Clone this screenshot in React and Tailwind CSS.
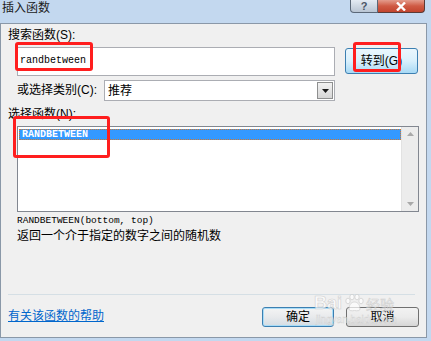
import React from "react";

const cjk = { fontFamily: '"Liberation Sans", "Noto Sans CJK SC", sans-serif' };
const mono = { fontFamily: '"Liberation Mono", "Noto Sans CJK SC", monospace' };
const faint = { WebkitTextStroke: "0.6px #c4c4c4" };

function RedBox({ className }) {
    return <div className={"absolute border-[3px] border-[#ff1e1e] rounded-[3px] pointer-events-none " + className} />;
}

export default function App() {
    return (
        <div className="relative w-[431px] h-[341px] overflow-hidden bg-[#c3d8ef] text-black" style={cjk}>
            {/* title bar */}
            <div className="flex h-[23px] items-start">
                <div className="pl-[2px] pt-[1px] text-[12px] leading-[14px] text-[#1b1b1b]">插入函数</div>
                <div className="ml-auto mr-[6px] flex">
                    <div className="w-[28px] h-[13px] rounded-bl-[4px] border border-t-0 border-[#5b6878] bg-gradient-to-b from-[#e4ebf3] to-[#b9c5d3] flex items-center justify-center text-[11px] leading-none font-bold text-[#4a5666]">
                        ?
                    </div>
                    <div className="w-[47px] h-[13px] rounded-br-[4px] border border-t-0 border-l-0 border-[#5b3a36] bg-gradient-to-b from-[#e39c8c] via-[#cf5a44] to-[#c2442d] flex items-center justify-center">
                        <svg width="12" height="9" viewBox="0 0 12 9">
                            <path d="M2 0.5 L10 8.5 M10 0.5 L2 8.5" stroke="#ffffff" strokeWidth="2.4" />
                        </svg>
                    </div>
                </div>
            </div>

            {/* dialog body */}
            <div className="w-[427px] h-[315px] border border-[#8a98a8] bg-[#f0f0f0] flex flex-col">
                <div className="mt-[3px] pl-[7px] h-[17px] text-[12px] leading-[17px]">搜索函数(S):</div>

                <div className="mt-[3px] pl-[16px] flex items-start">
                    <div className="w-[318px] h-[29px] border border-[#abadb3] bg-white flex items-center pl-[2px] pb-[2px]">
                        <span className="text-[10px] leading-none" style={mono}>randbetween</span>
                    </div>
                    <div className="ml-[10px] mt-[1px] w-[73px] h-[26px] rounded-[3px] border border-[#3c7fb1] bg-gradient-to-b from-[#eaf6fd] via-[#d9f0fc] to-[#a7d9f5] flex items-center justify-center text-[12px]">
                        转到(G)
                    </div>
                </div>

                <div className="mt-[4px] pl-[16px] flex items-center">
                    <div className="w-[87px] text-[12px] leading-[21px]">或选择类别(C):</div>
                    <div className="w-[231px] h-[21px] border border-[#abadb3] bg-white flex items-center">
                        <span className="pl-[3px] text-[12px]">推荐</span>
                        <div className="ml-auto mr-[1px] w-[16px] h-[17px] border border-[#8e8f8f] bg-gradient-to-b from-[#f2f2f2] to-[#d6d6d6] flex items-center justify-center">
                            <svg width="7" height="4" viewBox="0 0 7 4">
                                <path d="M0 0 L7 0 L3.5 4 Z" fill="#1a1a1a" />
                            </svg>
                        </div>
                    </div>
                </div>

                <div className="mt-[5px] pl-[7px] h-[17px] text-[12px] leading-[17px]">选择函数(N):</div>

                <div className="mt-[3px] ml-[16px] w-[402px] h-[86px] border border-[#828790] bg-white flex">
                    <div className="flex-1 pt-[2px] pl-[1px]">
                        <div className="h-[11px] bg-[#3399ff] border border-dotted border-[#d2772a] flex items-center pl-[2px]">
                            <span className="text-[10px] leading-none font-bold text-white" style={mono}>RANDBETWEEN</span>
                        </div>
                    </div>
                    <div className="w-[17px] bg-[#ececec] border-l border-[#e2e2e2] flex flex-col items-center justify-between py-[5px]">
                        <svg width="7" height="4" viewBox="0 0 7 4">
                            <path d="M0 4 L7 4 L3.5 0 Z" fill="#a9a9a9" />
                        </svg>
                        <svg width="7" height="4" viewBox="0 0 7 4">
                            <path d="M0 0 L7 0 L3.5 4 Z" fill="#a9a9a9" />
                        </svg>
                    </div>
                </div>

                <div className="mt-[2px] pl-[16px] h-[14px] text-[9.5px] leading-[14px]" style={mono}>RANDBETWEEN(bottom, top)</div>
                <div className="pl-[16px] h-[16px] text-[12px] leading-[16px]">返回一个介于指定的数字之间的随机数</div>

                <div className="mt-[50px] ml-[7px] w-[407px] h-[1px] bg-[#d5dfe5]" />

                <div className="mt-[12px] pl-[7px] pr-[7px] flex items-start">
                    <span className="mt-[1px] text-[12px] leading-[16px] text-[#0066cc] underline">有关该函数的帮助</span>
                    <div className="ml-auto flex gap-[12px]">
                        <div className="w-[72px] h-[20px] rounded-[3px] border border-[#3c7fb1] bg-gradient-to-b from-[#f4f4f4] via-[#e8eaec] to-[#d4dce3] shadow-[inset_0_0_0_1px_#a8dcf7] flex items-center justify-center text-[12px]">
                            确定
                        </div>
                        <div className="w-[73px] h-[20px] rounded-[3px] border border-[#707070] bg-gradient-to-b from-[#f2f2f2] via-[#ebebeb] to-[#d6d6d6] flex items-center justify-center text-[12px]">
                            取消
                        </div>
                    </div>
                </div>
            </div>

            {/* watermark */}
            <div className="absolute left-[314px] top-[294px] flex items-end gap-[2px] pointer-events-none opacity-70">
                <span className="text-[18px] font-bold leading-none text-white" style={faint}>Bai</span>
                <svg width="20" height="18" viewBox="0 0 20 18">
                    <g fill="#ffffff" stroke="#c4c4c4" strokeWidth="0.8">
                        <ellipse cx="4" cy="7" rx="2.2" ry="2.8" />
                        <ellipse cx="8" cy="3" rx="2.2" ry="2.8" />
                        <ellipse cx="13" cy="3" rx="2.2" ry="2.8" />
                        <ellipse cx="17" cy="7" rx="2.2" ry="2.8" />
                        <path d="M5 15 C5 10 8 8 10.5 8 C13 8 16 10 16 15 C16 17 13 17 10.5 16.5 C8 17 5 17 5 15 Z" />
                    </g>
                </svg>
                <span className="text-[14px] leading-none text-white" style={faint}>经验</span>
            </div>
            <div className="absolute left-[316px] top-[315px] text-[10px] leading-none text-white opacity-70 pointer-events-none" style={{ WebkitTextStroke: "0.4px #c4c4c4" }}>
                jingyan.baidu.com
            </div>

            {/* annotation boxes */}
            <RedBox className="left-[15px] top-[42px] w-[78px] h-[29px]" />
            <RedBox className="left-[353px] top-[42px] w-[48px] h-[30px]" />
            <RedBox className="left-[13px] top-[116px] w-[97px] h-[42px]" />
        </div>
    );
}
